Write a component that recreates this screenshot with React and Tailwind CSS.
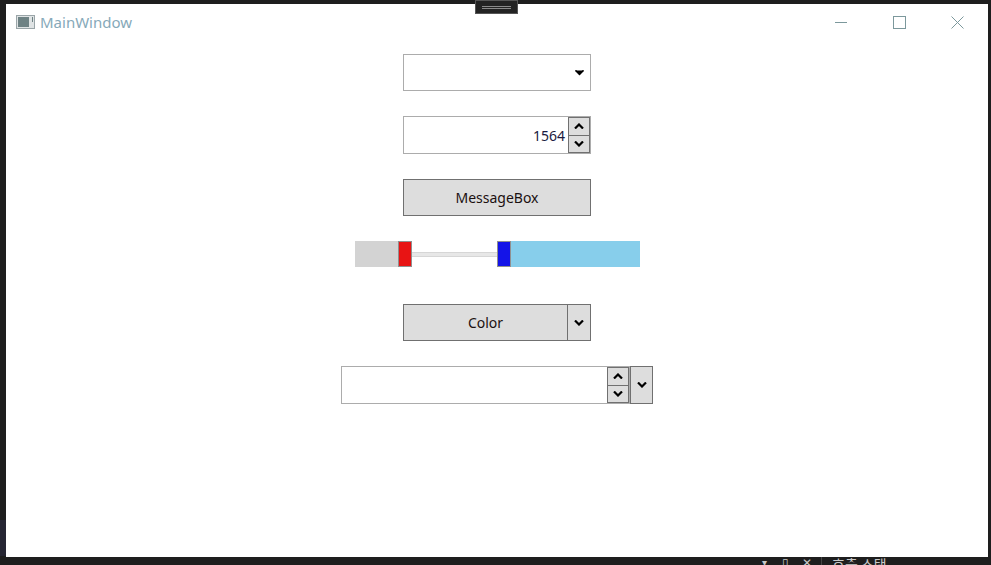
import React from 'react';

const font = { fontFamily: '"Noto Sans", "Open Sans", sans-serif' };

const Chevron = ({ up = false, className = '' }) => (
  <svg width="10" height="6" viewBox="0 0 10 6" className={className}>
    {up ? (
      <path d="M1 5.5 L5 1.5 L9 5.5" fill="none" stroke="#000" strokeWidth="2.2" />
    ) : (
      <path d="M1 0.5 L5 4.5 L9 0.5" fill="none" stroke="#000" strokeWidth="2.2" />
    )}
  </svg>
);

const Spinner = () => (
  <div className="flex flex-col w-[22px] h-full">
    <div className="flex-1 flex items-center justify-center bg-[#dddddd] border border-[#707070]">
      <Chevron up />
    </div>
    <div className="flex-1 flex items-center justify-center bg-[#dddddd] border border-[#707070] border-t-0">
      <Chevron />
    </div>
  </div>
);

const App = () => {
  return (
    <div className="w-[991px] h-[565px] bg-[#1e1e1e] overflow-hidden flex flex-col" style={font}>
      <div className="flex flex-1 pt-[4px]">
        <div className="w-[6px] flex flex-col">
          <div className="mt-[516px] h-[36px] bg-[#262633]"></div>
        </div>
        <div className="w-[982px] h-[553px] bg-white flex flex-col relative">
          {/* Title bar */}
          <div className="h-[36px] flex items-center">
            <div className="ml-[10px] w-[19px] h-[14px] border border-[#9aa5a8] bg-[#dfe3e4] flex p-[1px]">
              <div className="w-[11px] h-full bg-[#6e8284]"></div>
              <div className="ml-[3px] w-[1px] h-[5px] bg-[#6e8284]"></div>
            </div>
            <span className="ml-[5px] text-[15px] text-[#86a9b9] leading-none">MainWindow</span>
            <div className="ml-auto flex items-center h-full">
              <div className="w-[58px] flex justify-center">
                <div className="w-[12px] h-[1px] bg-[#7c989c]"></div>
              </div>
              <div className="w-[58px] flex justify-center">
                <div className="w-[13px] h-[13px] border border-[#7c989c]"></div>
              </div>
              <div className="w-[58px] flex justify-center mr-[2px]">
                <svg width="13" height="13" viewBox="0 0 13 13">
                  <path d="M0.5 0.5 L12.5 12.5 M12.5 0.5 L0.5 12.5" stroke="#7c989c" strokeWidth="1" />
                </svg>
              </div>
            </div>
          </div>
          {/* Grip */}
          <div className="absolute left-[469px] top-[-4px] w-[43px] h-[14px] bg-[#232323] border border-[#555555] flex flex-col items-center justify-center gap-[1px]">
            <div className="w-[29px] h-[1px] bg-[#8a8a8a]"></div>
            <div className="w-[29px] h-[1px] bg-[#8a8a8a]"></div>
          </div>

          {/* Content */}
          <div className="flex flex-col items-center text-[14px]">
            {/* ComboBox */}
            <div className="mt-[14px] w-[188px] h-[37px] border border-[#acacac] flex items-center justify-end pr-[6px]">
              <svg width="9" height="6" viewBox="0 0 9 6">
                <path d="M0 0.5 L9 0.5 L4.5 5.5 Z" fill="#000" />
                <path d="M0.5 0.5 L4.5 4 L8.5 0.5" fill="none" stroke="#000" strokeWidth="1.5" />
              </svg>
            </div>

            {/* Numeric */}
            <div className="mt-[25px] w-[188px] h-[38px] border border-[#acacac] flex items-stretch">
              <div className="flex-1 flex items-center justify-end pr-[3px] text-[#1a1a40]">1564</div>
              <Spinner />
            </div>

            {/* Button */}
            <div className="mt-[25px] w-[188px] h-[37px] bg-[#dddddd] border border-[#707070] flex items-center justify-center text-[#1b1010]">
              MessageBox
            </div>

            {/* Slider */}
            <div className="mt-[25px] w-[285px] h-[26px] flex items-stretch ml-[1px]">
              <div className="w-[43px] bg-[#d3d3d3]"></div>
              <div className="w-[14px] bg-[#e81414] border border-[#909090]"></div>
              <div className="w-[85px] flex items-center">
                <div className="w-full h-[5px] bg-[#e7e7e7] border-y border-[#d6d6d6]"></div>
              </div>
              <div className="w-[14px] bg-[#1414e8] border border-[#909090]"></div>
              <div className="flex-1 bg-[#87ceeb]"></div>
            </div>

            {/* Split button */}
            <div className="mt-[37px] w-[188px] h-[37px] bg-[#dddddd] border border-[#707070] flex items-stretch text-[#1b1010]">
              <div className="flex-1 flex items-center justify-center">Color</div>
              <div className="w-[23px] border-l border-[#707070] flex items-center justify-center">
                <Chevron />
              </div>
            </div>

            {/* Combined */}
            <div className="mt-[25px] w-[312px] h-[38px] flex items-stretch">
              <div className="flex-1 border border-[#acacac] flex items-stretch">
                <div className="flex-1"></div>
                <Spinner />
              </div>
              <div className="w-[23px] bg-[#dddddd] border border-[#707070] flex items-center justify-center">
                <Chevron />
              </div>
            </div>
          </div>
        </div>
        <div className="w-[3px]"></div>
      </div>
      {/* bottom strip */}
      <div className="h-[8px] relative overflow-hidden">
        <div className="absolute left-[762px] top-[0px] flex items-start text-[#c8c8c8] text-[12px] leading-none">
          <span className="text-[10px] w-[20px]">▾</span>
          <span className="w-[20px]">▯</span>
          <span className="w-[19px]">✕</span>
          <span className="w-[1px] h-[10px] bg-[#444] mr-[10px]"></span>
          <span className="text-[14px]" style={{ fontFamily: '"Noto Sans CJK KR", sans-serif' }}>호출 스택</span>
        </div>
      </div>
    </div>
  );
};

export default App;
